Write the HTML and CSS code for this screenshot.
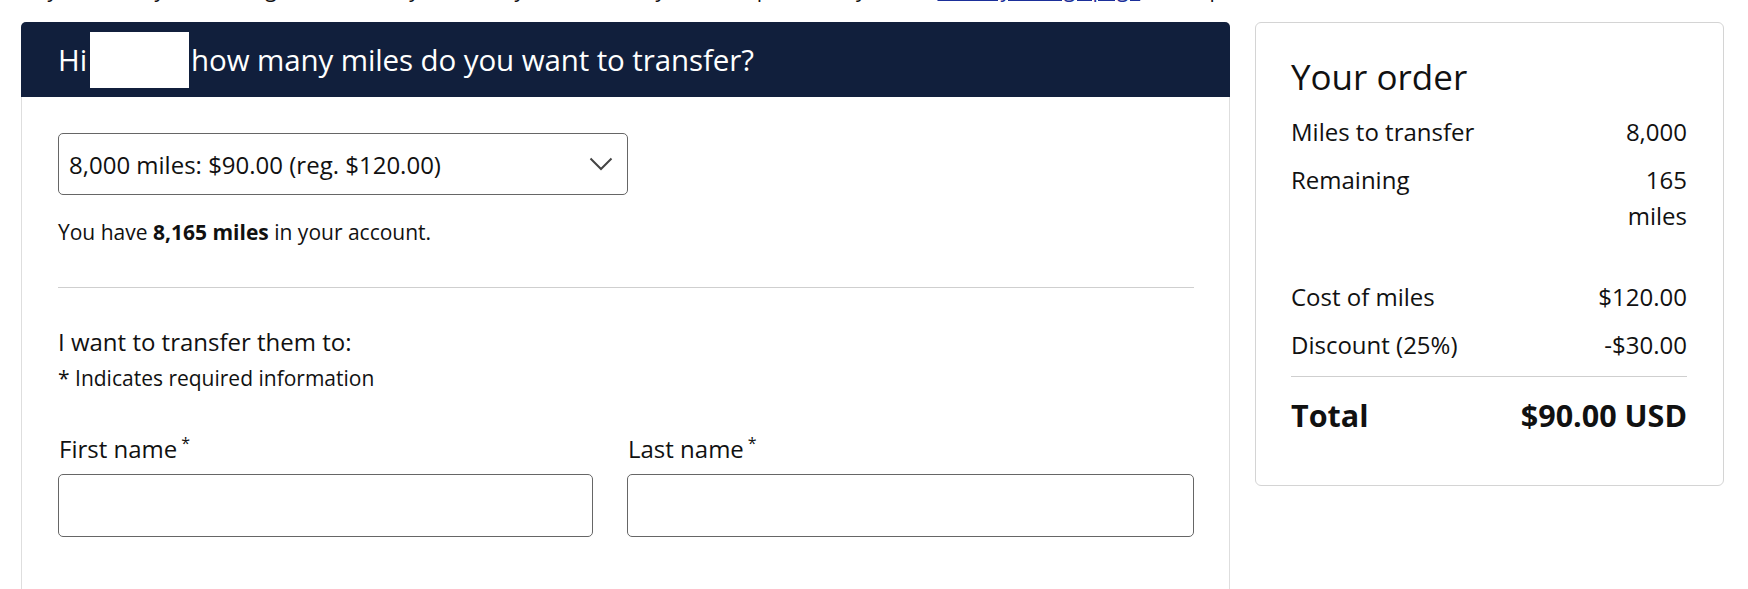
FILE: index.html
```html
<!DOCTYPE html>
<html lang="en">
<head>
<meta charset="utf-8">
<title>Transfer miles</title>
<link rel="stylesheet" href="styles.css">
</head>
<body>
<p class="intro">Buy miles for yourself or gift them to any member you choose. If you have questions, you can <a href="#">visit MyMileage page</a> for help.</p>
<div class="page">
  <section class="transfer-card">
    <div class="transfer-head">
      <span>Hi</span><span class="redact"></span><span>how many miles do you want to transfer?</span>
    </div>
    <div class="transfer-body">
      <div class="select-box">
        <span>8,000 miles: $90.00 (reg. $120.00)</span>
        <svg class="chev" width="24" height="14" viewBox="0 0 24 14"><path d="M1.5 1.5 L12 12 L22.5 1.5" fill="none" stroke="#444" stroke-width="2"/></svg>
      </div>
      <p class="balance">You have <strong>8,165 miles</strong> in your account.</p>
      <hr class="rule">
      <p class="subhead">I want to transfer them to:</p>
      <p class="required">* Indicates required information</p>
      <div class="name-grid">
        <div class="field">
          <label class="label">First name<sup>*</sup></label>
          <div class="input"></div>
        </div>
        <div class="field">
          <label class="label">Last name<sup>*</sup></label>
          <div class="input"></div>
        </div>
      </div>
    </div>
  </section>
  <aside class="order-card">
    <h2 class="order-title">Your order</h2>
    <div class="order-group">
      <div class="order-row"><span>Miles to transfer</span><span class="val">8,000</span></div>
      <div class="order-row"><span>Remaining</span><span class="val">165 miles</span></div>
    </div>
    <div class="order-group second">
      <div class="order-row"><span>Cost of miles</span><span class="val">$120.00</span></div>
      <div class="order-row"><span>Discount (25%)</span><span class="val">-$30.00</span></div>
    </div>
    <hr class="order-rule">
    <div class="total-row"><span>Total</span><span>$90.00 USD</span></div>
  </aside>
</div>
</body>
</html>
```

FILE: styles.css
```css
html, body {
  margin: 0;
  padding: 0;
  background: #fff;
  overflow: hidden;
}
body {
  font-family: "Open Sans", "Noto Sans", sans-serif;
  color: #111;
}
.intro {
  margin: -25px 0 0 0;
  padding-left: 21px;
  font-size: 21px;
  line-height: 28px;
  height: 28px;
  white-space: nowrap;
}
.intro a {
  color: #1b2f9a;
  text-decoration: underline;
}
.page {
  display: flex;
  align-items: flex-start;
  gap: 25px;
  margin-top: 19px;
  padding-left: 21px;
}
.transfer-card {
  width: 1209px;
  box-sizing: border-box;
  border: 1px solid #dedede;
  border-top: none;
  border-radius: 5px 5px 0 0;
}
.transfer-head {
  display: flex;
  align-items: center;
  height: 75px;
  margin: 0 -1px;
  padding-left: 37px;
  background: #111f3c;
  color: #fff;
  font-size: 29.5px;
  border-radius: 5px 5px 0 0;
  letter-spacing: -0.1px;
}
.redact {
  display: inline-block;
  width: 99px;
  height: 56px;
  background: #fff;
  margin: 0 2px 0 3px;
}
.transfer-body {
  padding: 36px 35px 70px 36px;
}
.select-box {
  display: flex;
  align-items: center;
  justify-content: space-between;
  width: 570px;
  height: 62px;
  box-sizing: border-box;
  border: 1px solid #666;
  border-radius: 5px;
  padding: 0 14px 0 10px;
  font-size: 24px;
}
.chev {
  display: block;
}
.balance {
  margin: 22px 0 0 0;
  font-size: 21px;
  line-height: 30px;
}
.balance strong {
  font-weight: 700;
}
.rule {
  margin: 40px 0 0 0;
  border: none;
  border-top: 1px solid #cfcfcf;
  height: 0;
}
.subhead {
  margin: 38px 0 0 0;
  font-size: 24px;
  line-height: 32px;
}
.required {
  margin: 6px 0 0 0;
  font-size: 21px;
  line-height: 28px;
}
.name-grid {
  display: grid;
  grid-template-columns: 535px 1fr;
  gap: 34px;
  margin-top: 41px;
}
.field {
  display: flex;
  flex-direction: column;
  gap: 9px;
}
.label {
  font-size: 24px;
  line-height: 32px;
  padding-left: 1px;
}
.label sup {
  font-size: 16px;
  line-height: 0;
  margin-left: 4px;
  vertical-align: 9px;
}
.input {
  height: 63px;
  box-sizing: border-box;
  border: 1px solid #666;
  border-radius: 5px;
}
.order-card {
  width: 469px;
  box-sizing: border-box;
  border: 1px solid #d4d4d4;
  border-radius: 6px;
  padding: 30px 36px 50px 35px;
}
.order-title {
  margin: 0;
  font-size: 35px;
  font-weight: 400;
  line-height: 48px;
}
.order-group {
  display: flex;
  flex-direction: column;
  gap: 12px;
  margin-top: 13px;
}
.order-group.second {
  margin-top: 45px;
}
.order-row {
  display: flex;
  justify-content: space-between;
  align-items: flex-start;
  font-size: 24px;
  line-height: 36px;
}
.val {
  max-width: 96px;
  text-align: right;
}
.order-rule {
  margin: 13px 0 0 0;
  border: none;
  border-top: 1px solid #cfcfcf;
  height: 0;
}
.total-row {
  display: flex;
  justify-content: space-between;
  margin-top: 18px;
  font-size: 30.5px;
  font-weight: 700;
  line-height: 40px;
}
```
